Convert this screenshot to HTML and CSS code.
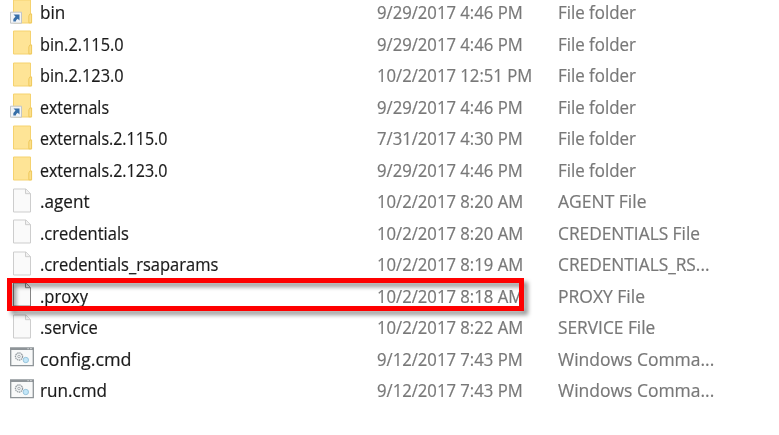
FILE: index.html
```html
<!DOCTYPE html>
<html lang="en">
<head>
<meta charset="utf-8">
<title>Files</title>
<link rel="stylesheet" href="styles.css">
</head>
<body>
<svg class="symbols" width="0" height="0">
  <symbol id="folder" viewBox="0 0 26 26">
    <path d="M4.500 2h17v14h1v9H4.500z" fill="#fee496" stroke="#f5d26f"/>
    <path d="M19.800 24.800v-6.800l1-2h1.800v8.800z" fill="#fbdf8b" stroke="#efc95f"/>
  </symbol>
  <symbol id="link" viewBox="0 0 26 26">
    <use href="#folder"/>
    <path d="M1.500 14.200h11v11h-11z" fill="#f3f5f7" stroke="#c2c5c8"/>
    <path d="M4.500 16.500h6v6L8.700 20.800Q6.800 21.800 6.800 23.500H4.300Q3.800 20.500 6.500 18.500z" fill="#386fa8"/>
  </symbol>
  <symbol id="file" viewBox="0 0 26 26">
    <path d="M4.500 2h12.500l4.500 4.500V25h-17z" fill="#fafafa" stroke="currentColor"/>
    <path d="M16.500 2v4.700h5" fill="#f1f1f1" stroke="currentColor"/>
  </symbol>
  <symbol id="cmd" viewBox="0 0 26 26">
    <path d="M1.700 4.200h22.600v17.500H1.700z" fill="#f8f9f9" stroke="#8e9498" stroke-width="1.300"/>
    <path d="M1 3.500h24v2.500H1z" fill="#8e9498"/>
    <path d="M18.500 4.700h1.200m1.500 0h1.500" stroke="#e5e7e8"/>
    <circle cx="10" cy="12.500" r="3.600" fill="#edf0f1" stroke="#91989d" stroke-width="1.200" stroke-dasharray="1.500 .6"/>
    <circle cx="10" cy="12.500" r="1.200" fill="#fff" stroke="#91989d" stroke-width=".7"/>
    <circle cx="16.800" cy="16" r="2.700" fill="#c2e6f8" stroke="#99c5dc" stroke-width="1"/>
  </symbol>
</svg>
<main class="files">
  <div class="row"><svg class="icon"><use href="#link"/></svg><span class="name wide">bin</span><span class="date">9/29/2017 4:46 PM</span><span class="type">File folder</span></div>
  <div class="row"><svg class="icon"><use href="#folder"/></svg><span class="name version">bin.2.115.0</span><span class="date">9/29/2017 4:46 PM</span><span class="type">File folder</span></div>
  <div class="row"><svg class="icon"><use href="#folder"/></svg><span class="name version">bin.2.123.0</span><span class="date">10/2/2017 12:51 PM</span><span class="type">File folder</span></div>
  <div class="row"><svg class="icon"><use href="#link"/></svg><span class="name narrow">externals</span><span class="date">9/29/2017 4:46 PM</span><span class="type">File folder</span></div>
  <div class="row"><svg class="icon"><use href="#folder"/></svg><span class="name narrow">externals.2.115.0</span><span class="date">7/31/2017 4:30 PM</span><span class="type">File folder</span></div>
  <div class="row"><svg class="icon"><use href="#folder"/></svg><span class="name narrow">externals.2.123.0</span><span class="date">9/29/2017 4:46 PM</span><span class="type">File folder</span></div>
  <div class="row"><svg class="icon"><use href="#file"/></svg><span class="name wide">.agent</span><span class="date">10/2/2017 8:20 AM</span><span class="type full">AGENT File</span></div>
  <div class="row"><svg class="icon"><use href="#file"/></svg><span class="name">.credentials</span><span class="date">10/2/2017 8:20 AM</span><span class="type caps">CREDENTIALS File</span></div>
  <div class="row"><svg class="icon"><use href="#file"/></svg><span class="name">.credentials_rsaparams</span><span class="date">10/2/2017 8:19 AM</span><span class="type caps">CREDENTIALS_RS...</span></div>
  <div class="row marked"><svg class="icon"><use href="#file"/></svg><span class="name">.proxy</span><span class="date">10/2/2017 8:18 AM</span><span class="type full">PROXY File</span><div class="highlight"></div></div>
  <div class="row"><svg class="icon"><use href="#file"/></svg><span class="name">.service</span><span class="date">10/2/2017 8:22 AM</span><span class="type caps">SERVICE File</span></div>
  <div class="row"><svg class="icon"><use href="#cmd"/></svg><span class="name command">config.cmd</span><span class="date">9/12/2017 7:43 PM</span><span class="type full">Windows Comma...</span></div>
  <div class="row"><svg class="icon"><use href="#cmd"/></svg><span class="name wide">run.cmd</span><span class="date">9/12/2017 7:43 PM</span><span class="type full">Windows Comma...</span></div>
</main>
</body>
</html>
```
FILE: styles.css
```css
body {
  margin: 0;
  height: 435px;
  overflow: hidden;
  background: #fff;
  font: 17.5px/31.5px "Open Sans", "Noto Sans", sans-serif;
}
.symbols { display: block; }
.files { margin-top: -3px; }
.row {
  display: grid;
  grid-template-columns: 31px 337px 180.5px 200px;
  align-items: center;
  height: 31.5px;
  padding-left: 9px;
  white-space: nowrap;
}
.icon { width: 26px; height: 26px; margin-top: -4px; color: #cdcdcd; }
.name, .date, .type {
  transform-origin: left;
  justify-self: start;
  -webkit-text-stroke: .2px currentColor;
}
.name { color: #1b1b1b; transform: scaleX(.943); }
.date { color: #787878; transform: scaleX(.953); }
.type { color: #787878; transform: scaleX(.965); }
.name.narrow { transform: scaleX(.915); }
.name.version { transform: scaleX(.932); }
.name.wide { transform: scaleX(.978); }
.name.command { transform: scaleX(1.025); }
.type.caps { transform: scaleX(.988); }
.type.full { transform: scaleX(.999); }
.marked { position: relative; }
.marked .icon { color: #858585; }
.highlight {
  position: absolute;
  left: 7px;
  top: -2.500px;
  box-sizing: border-box;
  width: 517px;
  height: 33px;
  border: 5px solid #fe0000;
  filter: drop-shadow(4px 4px 2px rgba(0, 0, 0, .4));
}
```
